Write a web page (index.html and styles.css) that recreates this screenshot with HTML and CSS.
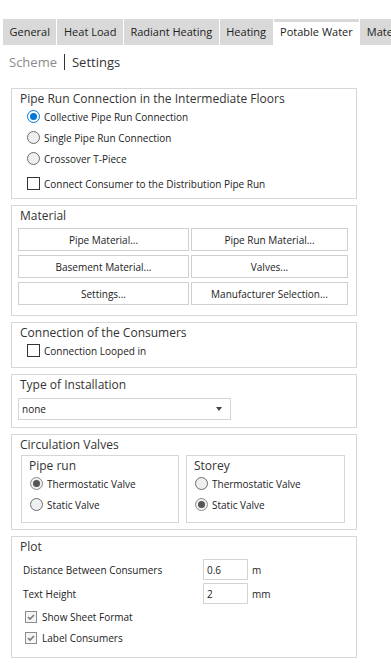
FILE: index.html
```html
<!DOCTYPE html>
<html>

<head>
	<title>Potable Water - Settings</title>
	<link rel="stylesheet" href="styles.css">
</head>

<body>

	<div class="tabs">
		<div class="tab">General</div>
		<div class="tab">Heat Load</div>
		<div class="tab">Radiant Heating</div>
		<div class="tab">Heating</div>
		<div class="tab active">Potable Water</div>
		<div class="tab">Materials</div>
	</div>

	<div class="subnav">
		<span class="dim">Scheme</span>
		<span class="sep"></span>
		<span class="cur">Settings</span>
	</div>

	<div class="group g-pipe">
		<div class="title">Pipe Run Connection in the Intermediate Floors</div>
		<div class="opt"><span class="radio on"></span>Collective Pipe Run Connection</div>
		<div class="opt"><span class="radio"></span>Single Pipe Run Connection</div>
		<div class="opt"><span class="radio"></span>Crossover T-Piece</div>
		<div class="opt spaced"><span class="box"></span>Connect Consumer to the Distribution Pipe Run</div>
	</div>

	<div class="group g-mat">
		<div class="title">Material</div>
		<div class="btns">
			<button class="btn">Pipe Material...</button>
			<button class="btn">Pipe Run Material...</button>
			<button class="btn">Basement Material...</button>
			<button class="btn">Valves...</button>
			<button class="btn">Settings...</button>
			<button class="btn">Manufacturer Selection...</button>
		</div>
	</div>

	<div class="group g-cons">
		<div class="title">Connection of the Consumers</div>
		<div class="opt"><span class="box"></span>Connection Looped in</div>
	</div>

	<div class="group g-inst">
		<div class="title">Type of Installation</div>
		<div class="select">
			<span>none</span>
			<svg width="6" height="4" viewBox="0 0 6 4"><polygon points="0,0 6,0 3,4" fill="#444"/></svg>
		</div>
	</div>

	<div class="group g-circ">
		<div class="title">Circulation Valves</div>
		<div class="valves">
			<div class="sub">
				<div class="sub-title">Pipe run</div>
				<div class="opt"><span class="radio set"></span>Thermostatic Valve</div>
				<div class="opt"><span class="radio"></span>Static Valve</div>
			</div>
			<div class="sub wide">
				<div class="sub-title">Storey</div>
				<div class="opt"><span class="radio"></span>Thermostatic Valve</div>
				<div class="opt"><span class="radio set"></span>Static Valve</div>
			</div>
		</div>
	</div>

	<div class="group g-plot">
		<div class="title">Plot</div>
		<div class="field first">
			<label>Distance Between Consumers</label>
			<input class="num" value="0.6">
			<span class="unit">m</span>
		</div>
		<div class="field">
			<label>Text Height</label>
			<input class="num" value="2">
			<span class="unit">mm</span>
		</div>
		<div class="opt tick first-tick">
			<span class="box ticked"><svg width="10" height="10" viewBox="0 0 10 10"><polyline points="2,5 4,7 8,3" fill="none" stroke="#7a7a7a" stroke-width="1.6"/></svg></span>Show Sheet Format
		</div>
		<div class="opt tick">
			<span class="box ticked"><svg width="10" height="10" viewBox="0 0 10 10"><polyline points="2,5 4,7 8,3" fill="none" stroke="#7a7a7a" stroke-width="1.6"/></svg></span>Label Consumers
		</div>
	</div>

</body>

</html>
```

FILE: styles.css
```css
html,
body {
	margin: 0;
	padding: 0;
	background-color: #ffffff;
	overflow: hidden;
}

body {
	width: 391px;
	height: 672px;
	font-family: "Open Sans", "Noto Sans", sans-serif;
	color: #222;
}

/* top tab strip */
.tabs {
	display: flex;
	gap: 1px;
	margin-top: 19px;
	padding-left: 3px;
	height: 26px;
	white-space: nowrap;
	overflow: hidden;
}

.tab {
	flex: none;
	padding: 0 6.5px;
	background-color: #d9d9d9;
	font-size: 11px;
	line-height: 26px;
	color: #222;
}

.tab.active {
	background-color: #ffffff;
	box-shadow: inset 0 3px 0 #d9d9d9;
}

/* Scheme | Settings */
.subnav {
	display: flex;
	align-items: center;
	height: 34px;
	padding-left: 9px;
	margin-bottom: 9px;
	font-size: 13px;
}

.subnav .dim {
	color: #8a8a8a;
}

.subnav .cur {
	color: #333;
}

.subnav .sep {
	width: 1px;
	height: 16px;
	background-color: #333;
	margin: 0 7px;
}

/* group boxes */
.group {
	box-sizing: border-box;
	width: 346px;
	margin: 0 0 6px 11px;
	border: 1px solid #d6d6d6;
}

.g-pipe { height: 111px; }
.g-mat { height: 111px; }
.g-cons { height: 46px; }
.g-inst { height: 54px; }
.g-circ { height: 96px; }
.g-plot { height: 122px; }

.title {
	padding: 3px 0 0 8px;
	font-size: 12px;
	line-height: 14px;
	color: #333;
}

.opt {
	display: flex;
	align-items: center;
	height: 21px;
	padding-left: 15px;
	font-size: 10px;
	white-space: nowrap;
}

.opt.spaced {
	margin-top: 4px;
}

.radio {
	flex: none;
	box-sizing: border-box;
	width: 13px;
	height: 13px;
	margin-right: 4px;
	border: 1px solid #6d6d6d;
	border-radius: 50%;
	background-color: #efefef;
	display: flex;
	align-items: center;
	justify-content: center;
}

.radio.on {
	border-color: #0078d7;
	background-color: #ffffff;
}

.radio.on::after {
	content: "";
	width: 7px;
	height: 7px;
	border-radius: 50%;
	background-color: #0078d7;
}

.radio.set {
	border-color: #8a8a8a;
}

.radio.set::after {
	content: "";
	width: 7px;
	height: 7px;
	border-radius: 50%;
	background-color: #555;
}

.box {
	flex: none;
	box-sizing: border-box;
	width: 13px;
	height: 13px;
	margin-right: 4px;
	border: 1px solid #333;
	background-color: #ffffff;
}

.box.ticked {
	width: 12px;
	height: 12px;
	margin-right: 5px;
	border-color: #8c8c8c;
	background-color: #f4f4f4;
	display: flex;
	align-items: center;
	justify-content: center;
}

/* material buttons */
.btns {
	display: grid;
	grid-template-columns: 171px 157px;
	column-gap: 2px;
	row-gap: 4px;
	margin: 5px 0 0 6px;
}

.btn {
	height: 23px;
	padding: 0;
	border: 1px solid #d0d0d0;
	background-color: #ffffff;
	font-family: "Open Sans", "Noto Sans", sans-serif;
	font-size: 10px;
	color: #222;
}

/* dropdown */
.select {
	display: flex;
	align-items: center;
	justify-content: space-between;
	box-sizing: border-box;
	width: 213px;
	height: 22px;
	margin: 6px 0 0 6px;
	padding: 0 8px 0 3px;
	border: 1px solid #d4d4d4;
	font-size: 10px;
}

/* circulation valves */
.valves {
	display: flex;
	gap: 7px;
	margin: 3px 0 0 9px;
}

.sub {
	box-sizing: border-box;
	width: 158px;
	height: 68px;
	border: 1px solid #d6d6d6;
}

.sub.wide {
	width: 159px;
}

.sub-title {
	padding: 3px 0 0 7px;
	font-size: 12px;
	line-height: 14px;
	color: #333;
}

.sub .opt {
	padding-left: 8px;
}

/* plot */
.field {
	display: flex;
	align-items: center;
	height: 21px;
	margin-top: 3px;
	padding-left: 11px;
	font-size: 10px;
}

.field.first {
	margin-top: 5px;
}

.field label {
	width: 180px;
}

.num {
	box-sizing: border-box;
	width: 45px;
	height: 21px;
	padding: 0 3px;
	border: 1px solid #d4d4d4;
	font-family: "Open Sans", "Noto Sans", sans-serif;
	font-size: 10px;
	color: #222;
	outline: none;
}

.unit {
	margin-left: 4px;
}

.opt.tick {
	padding-left: 13px;
}

.opt.first-tick {
	margin-top: 2px;
}
```
